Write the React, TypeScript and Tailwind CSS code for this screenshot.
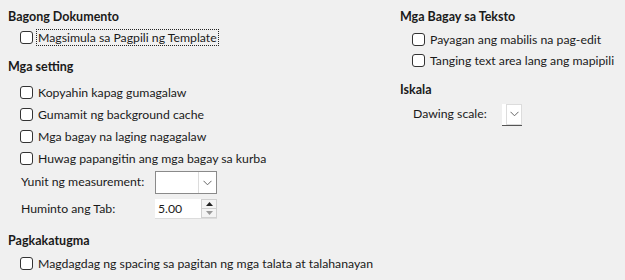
import React from "react";

const font = { fontFamily: 'Lato, "Liberation Sans", sans-serif' };

function Check({ label, focused }: { label: string; focused?: boolean }) {
  return (
    <div className="flex items-center h-[22px] pl-3 whitespace-nowrap">
      <span className="w-[13px] h-[13px] rounded-[3px] border border-[#333] bg-white shrink-0" />
      <span
        className={
          "ml-[4px] leading-[15px] px-[1px] " +
          (focused ? "outline outline-1 outline-dotted outline-[#222]" : "")
        }
      >
        {label}
      </span>
    </div>
  );
}

function Heading({ children }: { children: React.ReactNode }) {
  return <div className="font-bold text-[12.5px] h-[20px] leading-[20px]">{children}</div>;
}

function Chevron() {
  return (
    <svg width="9" height="6" viewBox="0 0 9 6" fill="none">
      <path d="M0.5 0.8 L4.5 4.8 L8.5 0.8" stroke="#666" strokeWidth="1" />
    </svg>
  );
}

export default function App() {
  return (
    <div
      className="w-[625px] h-[280px] bg-[#f0f0f0] text-[#1a1a1a] text-[12.25px] flex px-2 pt-[7px]"
      style={font}
    >
      {/* left column */}
      <div className="w-[392px] flex flex-col">
        <Heading>Bagong Dokumento</Heading>
        <div className="-mt-[1px]">
          <Check label="Magsimula sa Pagpili ng Template" focused />
        </div>
        <div className="mt-[9px]">
          <Heading>Mga setting</Heading>
        </div>
        <div className="mt-[4px] flex flex-col">
          <Check label="Kopyahin kapag gumagalaw" />
          <Check label="Gumamit ng background cache" />
          <Check label="Mga bagay na laging nagagalaw" />
          <Check label="Huwag papangitin ang mga bagay sa kurba" />
        </div>
        <div className="mt-[2px] flex items-center pl-[13px] h-[23px]">
          <span className="w-[134px] whitespace-nowrap">Yunit ng measurement:</span>
          <div className="w-[62px] h-[23px] bg-white border border-[#8a8a8a] flex">
            <div className="flex-1" />
            <div className="w-[18px] border-l border-[#dcdcdc] flex items-center justify-center">
              <Chevron />
            </div>
          </div>
        </div>
        <div className="mt-[5px] flex items-center pl-[13px] h-[20px]">
          <span className="w-[134px]">Huminto ang Tab:</span>
          <div className="w-[62px] h-[20px] bg-white flex border-b border-[#dcdcdc]">
            <div className="flex-1 pl-[3px] leading-[20px]">5.00</div>
            <div className="w-[16px] flex flex-col border border-[#d0d0d0] bg-[#f4f4f4]">
              <div className="flex-1 flex items-center justify-center border-b border-[#d0d0d0]">
                <svg width="7" height="4" viewBox="0 0 7 4">
                  <path d="M0 4 L3.5 0 L7 4 Z" fill="#222" />
                </svg>
              </div>
              <div className="flex-1 flex items-center justify-center">
                <svg width="7" height="4" viewBox="0 0 7 4">
                  <path d="M0 0 L3.5 4 L7 0 Z" fill="#999" />
                </svg>
              </div>
            </div>
          </div>
        </div>
        <div className="mt-[12px]">
          <Heading>Pagkakatugma</Heading>
        </div>
        <div className="mt-[1px]">
          <Check label="Magdagdag ng spacing sa pagitan ng mga talata at talahanayan" />
        </div>
      </div>

      {/* right column */}
      <div className="flex-1 flex flex-col">
        <Heading>Mga Bagay sa Teksto</Heading>
        <div className="mt-[1px] flex flex-col">
          <Check label="Payagan ang mabilis na pag-edit" />
          <div className="-mt-[1px]">
            <Check label="Tanging text area lang ang mapipili" />
          </div>
        </div>
        <div className="mt-[9px]">
          <Heading>Iskala</Heading>
        </div>
        <div className="mt-[3px] flex items-center pl-[13px] h-[23px]">
          <span className="w-[89px] whitespace-nowrap">Dawing scale:</span>
          <div className="w-[20px] h-[22px] bg-white border-b border-[#555] flex">
            <div className="w-[4px]" />
            <div className="flex-1 border border-[#dcdcdc] flex items-center justify-center">
              <Chevron />
            </div>
          </div>
        </div>
      </div>
    </div>
  );
}
